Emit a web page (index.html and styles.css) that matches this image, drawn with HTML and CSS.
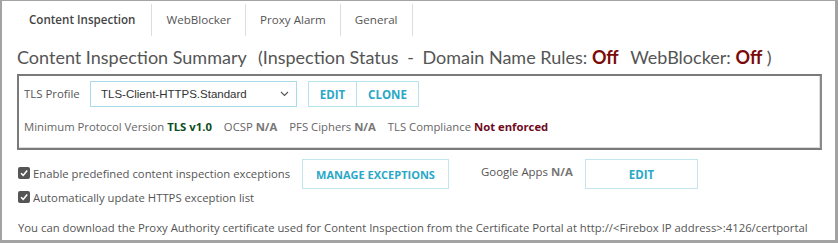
FILE: index.html
```html
<!DOCTYPE html>
<html>
<head>
<meta charset="utf-8">
<link rel="stylesheet" href="styles.css">
</head>
<body>
<div class="frame">
  <ul class="tabs">
    <li class="tab active">Content Inspection</li>
    <li class="tab">WebBlocker</li>
    <li class="tab">Proxy Alarm</li>
    <li class="tab">General</li>
  </ul>
  <h2 class="title">Content Inspection Summary <span class="gap"></span>(Inspection Status <span class="sp">-</span> Domain Name Rules: <span class="off">Off</span> <span class="gap"></span>WebBlocker: <span class="off">Off</span> )</h2>
  <div class="summary">
    <div class="row1">
      <span class="label">TLS Profile</span>
      <div class="select">
        <span class="select-text">TLS-Client-HTTPS.Standard</span>
        <svg class="chev" width="9" height="6" viewBox="0 0 9 6"><path d="M1 1 L4.5 4.5 L8 1" fill="none" stroke="#555" stroke-width="1.1"/></svg>
      </div>
      <div class="btn-group">
        <span class="btn b-edit">EDIT</span>
        <span class="btn b-clone">CLONE</span>
      </div>
    </div>
    <div class="row2">
      <span>Minimum Protocol Version <b class="green">TLS v1.0</b></span>
      <span>OCSP <b class="na">N/A</b></span>
      <span>PFS Ciphers <b class="na">N/A</b></span>
      <span>TLS Compliance <b class="red">Not enforced</b></span>
    </div>
  </div>
  <div class="options">
    <div class="opt-left">
      <label class="check"><span class="box"><svg width="10" height="10" viewBox="0 0 10 10"><path d="M2 5.2 L4.2 7.4 L8.2 2.6" fill="none" stroke="#fff" stroke-width="1.6"/></svg></span>Enable predefined content inspection exceptions</label>
      <label class="check"><span class="box"><svg width="10" height="10" viewBox="0 0 10 10"><path d="M2 5.2 L4.2 7.4 L8.2 2.6" fill="none" stroke="#fff" stroke-width="1.6"/></svg></span>Automatically update HTTPS exception list</label>
    </div>
    <span class="btn b-manage">MANAGE EXCEPTIONS</span>
    <span class="gapps">Google Apps <b class="na">N/A</b></span>
    <span class="btn b-gedit">EDIT</span>
  </div>
  <p class="footer">You can download the Proxy Authority certificate used for Content Inspection from the Certificate Portal at http://&lt;Firebox IP address&gt;:4126/certportal</p>
</div>
</body>
</html>
```

FILE: styles.css
```css
html, body {
  margin: 0;
  padding: 0;
  background: #fff;
}
.frame {
  box-sizing: border-box;
  width: 838px;
  height: 243px;
  border-style: solid;
  border-color: #a3a3a3;
  border-width: 1px 3px 3px 2px;
  font-family: "Open Sans", sans-serif;
  color: #555;
  font-size: 11.4px;
  overflow: hidden;
}
.tabs {
  list-style: none;
  margin: 3px 0 0 11px;
  padding: 0;
  display: flex;
  height: 32px;
}
.tab {
  box-sizing: border-box;
  height: 32px;
  line-height: 32px;
  padding: 0 14px;
  font-size: 11.6px;
  color: #555;
  border-right: 1px solid #ddd;
}
.tab.active {
  font-weight: 600;
  color: #444;
  padding: 0 16px;
}
.title {
  margin: 10px 0 0 15px;
  font-family: "Lato", sans-serif;
  font-weight: 400;
  font-size: 18px;
  line-height: 22px;
  color: #555;
  white-space: nowrap;
}
.gap { display: inline-block; width: 7px; }
.sp { padding: 0 4px; }
.off {
  color: #7a0b0b;
  font-weight: 700;
}
.summary {
  box-sizing: border-box;
  margin: 6px 0 0 15px;
  width: 805px;
  height: 76px;
  border: 2px solid #7a7a7a;
  border-right-color: #8a8a8a;
  box-shadow: inset -1px -1px 0 #ddd;
  padding: 5px 0 0 5px;
}
.row1 {
  display: flex;
  align-items: center;
  height: 26px;
}
.label {
  width: 66px;
  font-size: 11.4px;
  margin-top: -1px;
  color: #555;
}
.select {
  box-sizing: border-box;
  width: 207px;
  height: 26px;
  border: 1px solid #a9dcea;
  display: flex;
  align-items: center;
  padding: 0 7px 0 10px;
  justify-content: space-between;
}
.select-text {
  font-family: "Liberation Sans", Arial, sans-serif;
  font-size: 11.5px;
  color: #333;
}
.btn-group {
  display: flex;
  margin-left: 11px;
  border: 1px solid #b6e2ec;
  height: 26px;
  box-sizing: border-box;
}
.btn {
  display: flex;
  align-items: center;
  justify-content: center;
  box-sizing: border-box;
  font-weight: 700;
  font-size: 11.5px;
  color: #29a8c7;
}
.b-edit { width: 48px; border-right: 1px solid #b6e2ec; }
.b-clone { width: 61px; }
.row2 {
  display: flex;
  gap: 12px;
  margin-top: 12px;
  font-size: 11.3px;
  color: #666;
}
.row2 b { font-weight: 700; }
.green { color: #0b4d1e; }
.na { color: #777; }
.red { color: #6f0a1e; }
.options {
  display: flex;
  align-items: flex-start;
  margin: 9px 0 0 16px;
}
.opt-left {
  display: flex;
  flex-direction: column;
  gap: 6px;
  margin-top: 5px;
  width: 284px;
}
.check {
  display: flex;
  align-items: center;
  font-size: 11.3px;
  color: #555;
  height: 18px;
  white-space: nowrap;
}
.box {
  width: 12px;
  height: 12px;
  border-radius: 2px;
  background: #555;
  display: inline-flex;
  align-items: center;
  justify-content: center;
  margin-right: 3px;
}
.b-manage {
  width: 147px;
  height: 30px;
  border: 1px solid #c3e6ee;
  font-size: 11px;
}
.gapps {
  margin: 6px 0 0 32px;
  width: 104px;
  font-size: 11.4px;
  line-height: 14px;
  color: #555;
}
.b-gedit {
  width: 113px;
  height: 30px;
  border: 1px solid #c3e6ee;
}
.footer {
  margin: 14px 0 0 16px;
  font-size: 11.3px;
  line-height: 16px;
  color: #555;
  white-space: nowrap;
}
```
